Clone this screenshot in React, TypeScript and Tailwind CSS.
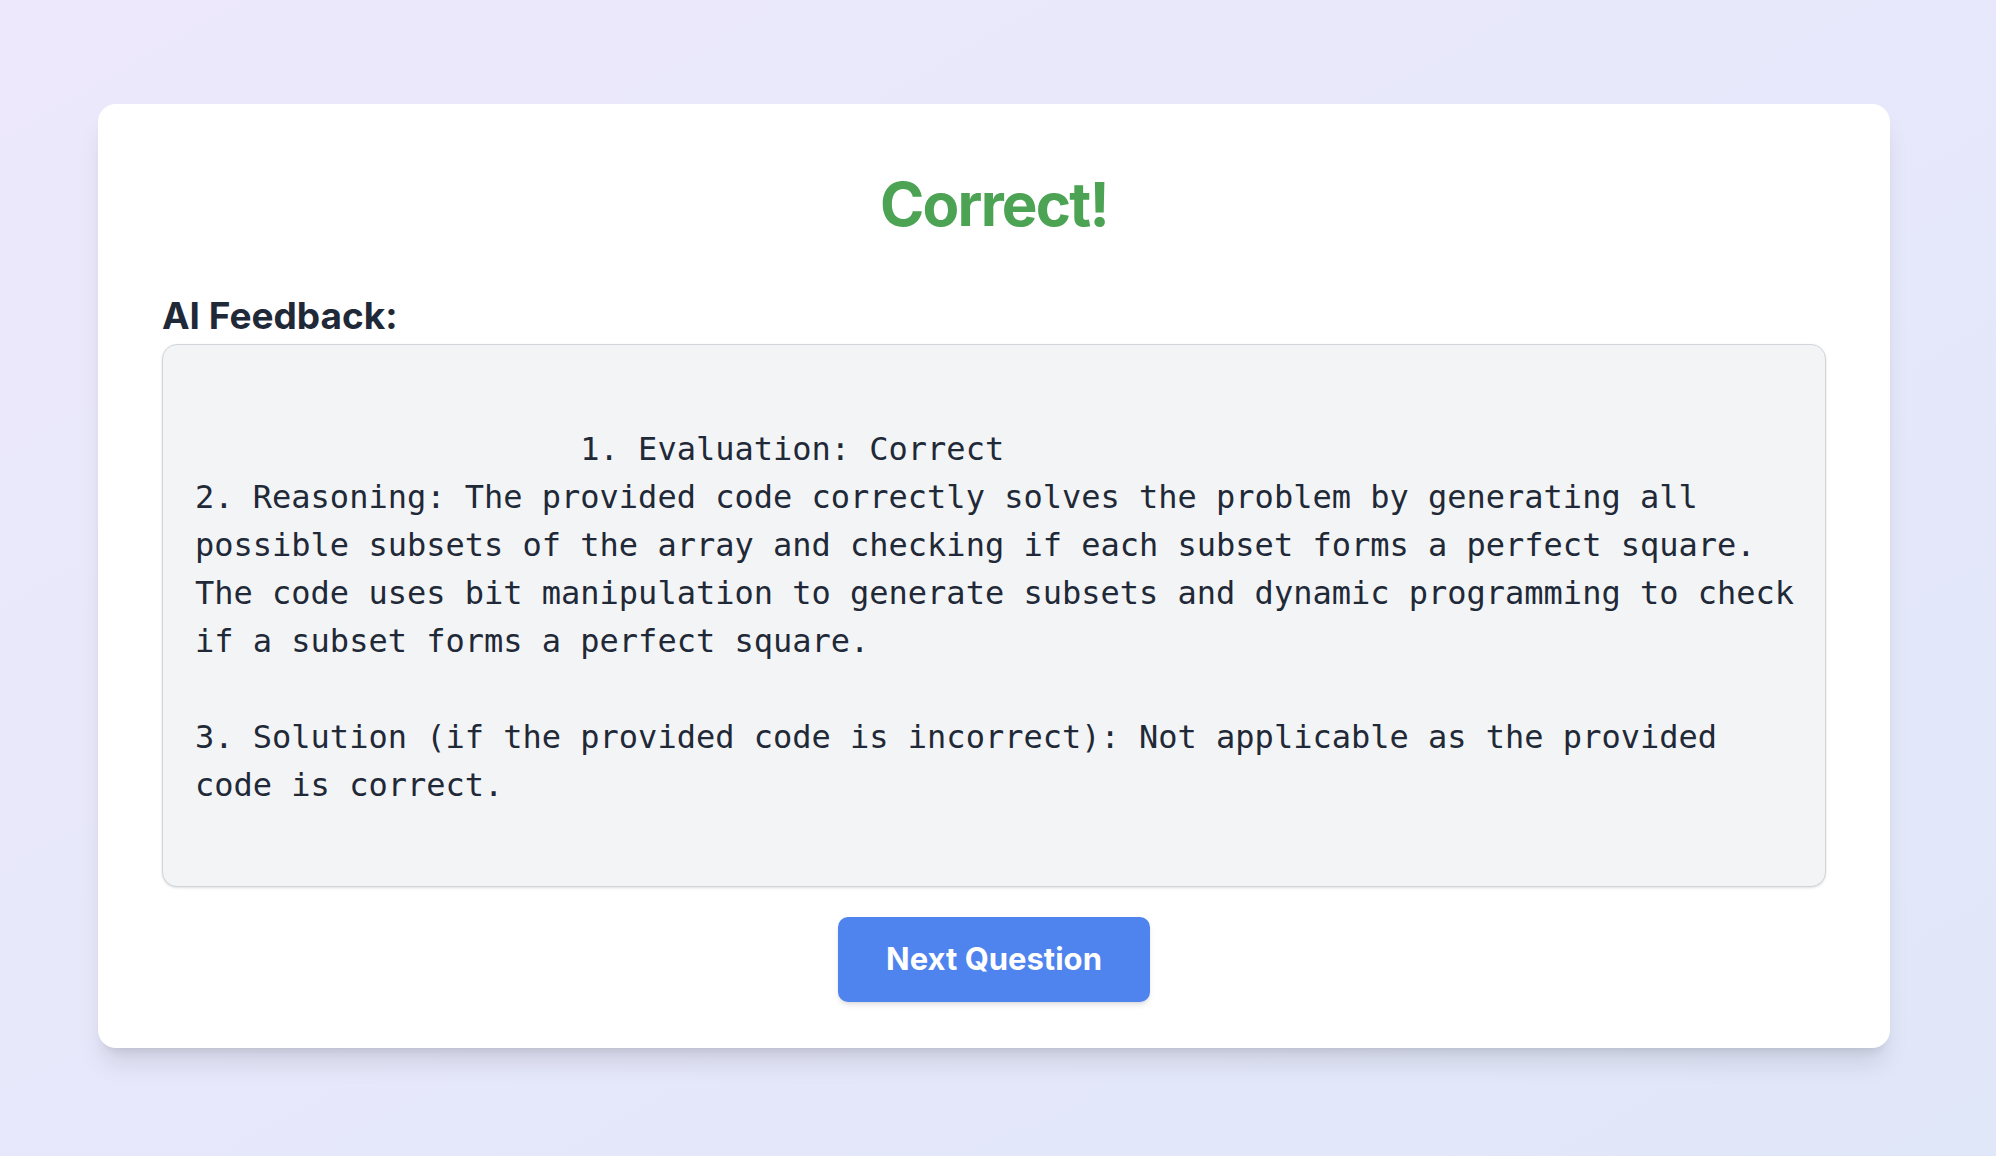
const feedback = `
                    1. Evaluation: Correct
2. Reasoning: The provided code correctly solves the problem by generating all
possible subsets of the array and checking if each subset forms a perfect square.
The code uses bit manipulation to generate subsets and dynamic programming to check
if a subset forms a perfect square.

3. Solution (if the provided code is incorrect): Not applicable as the provided
code is correct.
                `;

export default function App() {
  return (
    <div className="flex min-h-screen items-center justify-center bg-gradient-to-br from-[#ede8fc] to-[#e0e7f9] pr-2 pb-1 font-['Inter',sans-serif]">
      <div className="w-[1792px] rounded-[18px] bg-white px-16 pt-12 pb-[46px] shadow-xl">
        <h1 className="mt-[22px] text-center text-[60px] leading-none font-bold tracking-[-0.03em] text-[#4ca354]">
          Correct!
        </h1>
        <h2 className="mt-[60px] text-[37px] leading-[1.2] font-bold text-[#1f2937]">AI Feedback:</h2>
        <div className="mt-[5px] rounded-[15px] border border-[#d1d5db] bg-[#f3f4f6] px-8 pt-8 pb-[29px] shadow-sm">
          <pre className="font-['DejaVu_Sans_Mono',monospace] text-[32px] leading-[48px] whitespace-pre text-[#1f2937]">
            {feedback}
          </pre>
        </div>
        <div className="mt-[30px] flex justify-center">
          <button className="h-[85px] w-[312px] rounded-[10px] bg-[#4f83ee] text-[31px] font-bold text-white shadow-md">
            Next Question
          </button>
        </div>
      </div>
    </div>
  );
}
